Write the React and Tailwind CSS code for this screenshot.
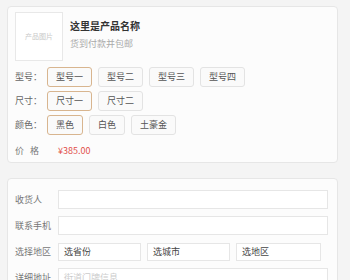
import React from 'react';

const font = { fontFamily: '"Noto Sans CJK SC", "Noto Sans", sans-serif' };

const OptionRow = ({ label, options, selected = 0 }) => (
  <div className="flex items-center h-[20px]">
    <span className="w-[32px] text-[9px] text-[#666]">{label}</span>
    <div className="flex gap-[6px]">
      {options.map((o, i) => (
        <span
          key={o}
          className={
            'h-[20px] px-[8px] flex items-center rounded-[3px] border text-[9px] text-[#555] bg-[#fafafa] ' +
            (i === selected ? 'border-[#d8b58f]' : 'border-[#e3e3e3]')
          }
        >
          {o}
        </span>
      ))}
    </div>
  </div>
);

const FormRow = ({ label, children }) => (
  <div className="flex items-center h-[19px]">
    <span className="w-[43px] text-[9px] text-[#777] whitespace-nowrap">{label}</span>
    {children}
  </div>
);

const App = () => {
  return (
    <div className="h-[280px] overflow-hidden bg-[#f4f4f4] pt-[6px] pl-[7px] pr-[12px]" style={font}>
      <div className="h-[157px] bg-[#fcfcfc] border border-[#e6e6e6] rounded-[4px] pl-[7px] pt-[5px]">
        <div className="flex">
          <div className="w-[48px] h-[49px] border border-[#e8e8e8] bg-white flex items-center justify-center text-[7px] text-[#c8c8c8]">
            产品图片
          </div>
          <div className="ml-[7px] pt-[7px]">
            <div className="text-[10px] font-bold text-[#333] leading-[14px]">这里是产品名称</div>
            <div className="mt-[5px] text-[9px] text-[#aaa] leading-[12px]">货到付款并包邮</div>
          </div>
        </div>
        <div className="mt-[6px] flex flex-col gap-[4px]">
          <OptionRow label="型号：" options={['型号一', '型号二', '型号三', '型号四']} />
          <OptionRow label="尺寸：" options={['尺寸一', '尺寸二']} />
          <OptionRow label="颜色：" options={['黑色', '白色', '土豪金']} />
        </div>
        <div className="mt-[10px] flex items-center text-[9px] leading-[12px]">
          <span className="w-[43px] text-[#777] tracking-[6px]">价格</span>
          <span className="text-[#e2504a]">¥385.00</span>
        </div>
      </div>

      <div className="mt-[15px] h-[120px] bg-[#fcfcfc] border border-[#e6e6e6] rounded-[4px] pl-[7px] pr-[9px] pt-[11px] flex flex-col gap-[7px]">
        <FormRow label="收货人">
          <div className="flex-1 h-[19px] bg-white border border-[#e6e6e6]" />
        </FormRow>
        <FormRow label="联系手机">
          <div className="flex-1 h-[19px] bg-white border border-[#e6e6e6]" />
        </FormRow>
        <FormRow label="选择地区">
          <div className="flex gap-[6px]">
            {['选省份', '选城市', '选地区'].map((t, i) => (
              <div
                key={t}
                className={
                  'h-[18px] bg-white border border-[#e6e6e6] pl-[5px] flex items-center text-[9px] text-[#444] ' +
                  (i === 2 ? 'w-[85px]' : 'w-[83px]')
                }
              >
                {t}
              </div>
            ))}
          </div>
        </FormRow>
        <FormRow label="详细地址">
          <div className="flex-1 h-[19px] bg-white border border-[#e6e6e6] pl-[5px] flex items-center text-[9px] text-[#ccc]">
            街道门牌信息
          </div>
        </FormRow>
      </div>
    </div>
  );
};

export default App;
